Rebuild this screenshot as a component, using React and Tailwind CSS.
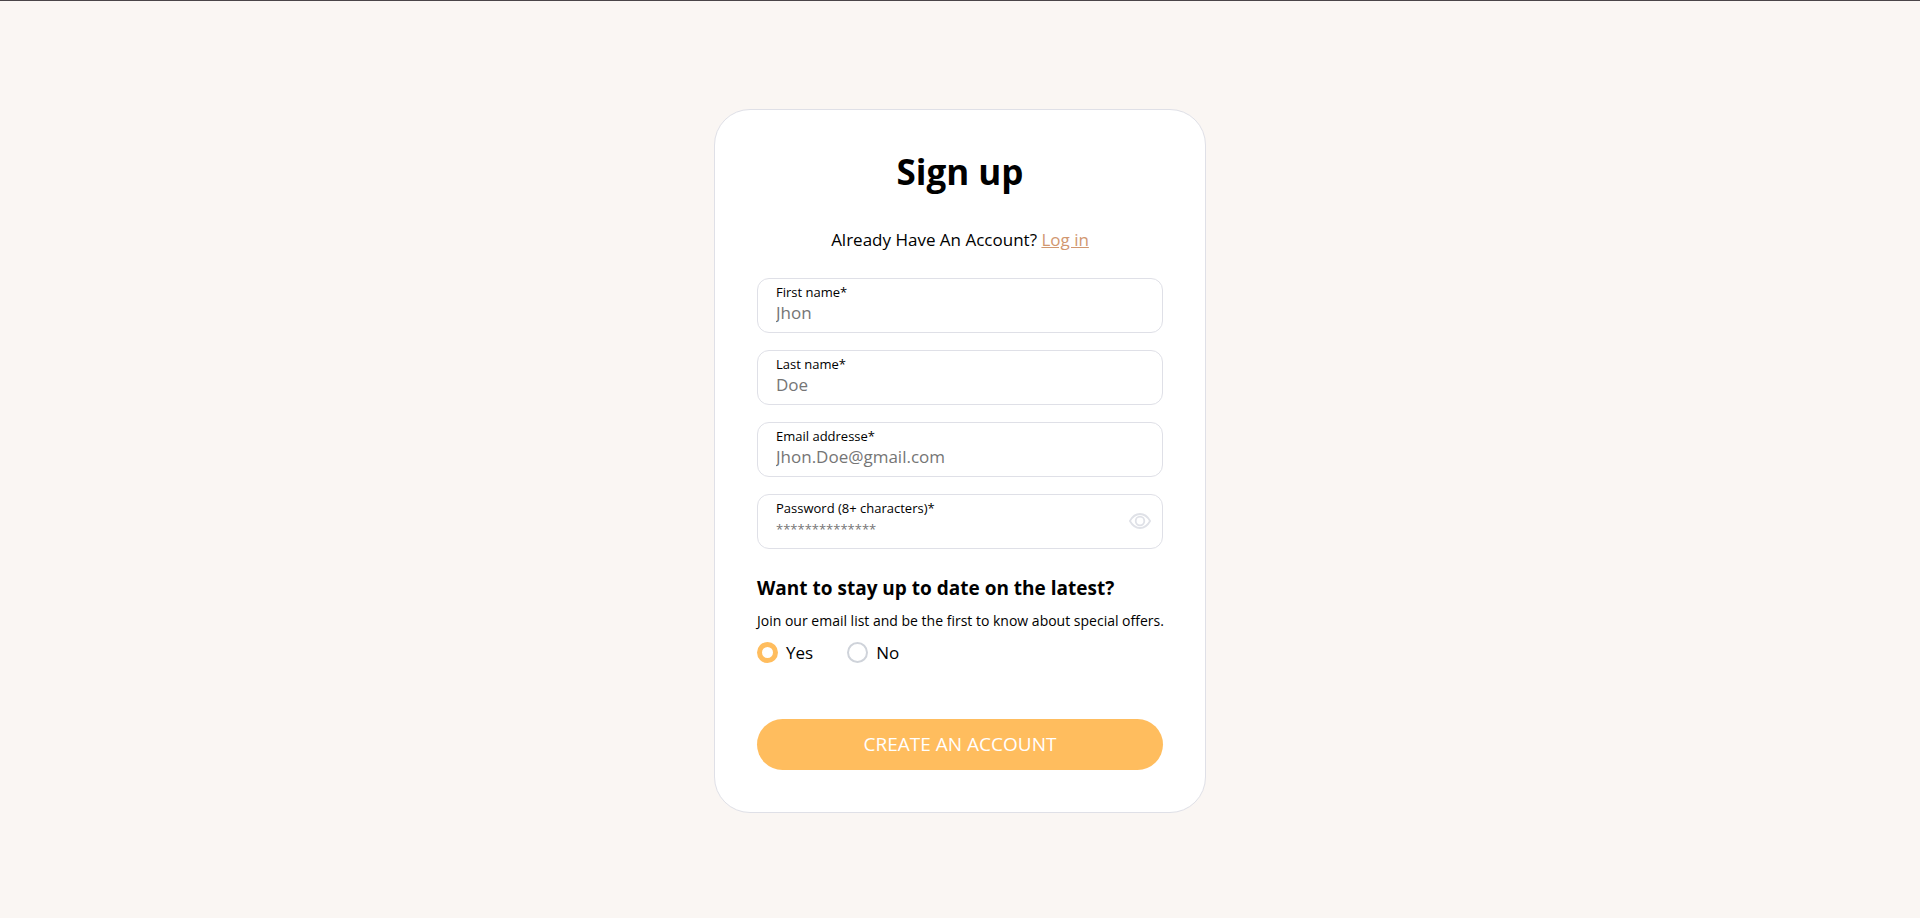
import { useState } from "react";

function Field({ id, label, type = "text", placeholder, textSize = "text-[17px]", children }) {
  return (
    <div className="flex h-[55px] items-center rounded-xl border border-[#dfe0e7] pr-[10px] pl-[18px]">
      <div className="flex min-w-0 flex-1 flex-col pb-1">
        <label htmlFor={id} className="text-[13px] leading-5">
          {label}
        </label>
        <input
          id={id}
          name={id}
          type={type}
          placeholder={placeholder}
          className={`h-[22px] w-full bg-transparent outline-none placeholder:text-[#757575] ${textSize}`}
        />
      </div>
      {children}
    </div>
  );
}

function Choice({ value, label, checked, onChange }) {
  return (
    <label className="flex items-center gap-2 text-[17px] leading-6">
      <input
        type="radio"
        name="newsletter"
        value={value}
        checked={checked}
        onChange={() => onChange(value)}
        className="size-[21px] appearance-none rounded-full border-2 border-[#cfd3da] bg-white checked:border-5 checked:border-[#ffbd5e]"
      />
      {label}
    </label>
  );
}

export default function App() {
  const [news, setNews] = useState("yes");
  const [visible, setVisible] = useState(false);

  return (
    <main className="flex min-h-screen items-center justify-center border-t border-[#4a4548] bg-[#faf6f3] pt-[2px] font-['Open_Sans',sans-serif] text-black">
      <form
        onSubmit={(e) => e.preventDefault()}
        className="w-full max-w-[492px] rounded-[36px] border border-[#dfe0e7] bg-white p-[42px]"
      >
        <h1 className="text-center text-[35px] leading-10 font-bold">Sign up</h1>
        <p className="mt-9 text-center text-[17px] leading-6">
          Already Have An Account?{" "}
          <a href="#login" className="text-[#d19770] underline">
            Log in
          </a>
        </p>

        <div className="mt-[26px] flex flex-col gap-[17px]">
          <Field id="first-name" label="First name*" placeholder="Jhon" />
          <Field id="last-name" label="Last name*" placeholder="Doe" />
          <Field id="email" label="Email addresse*" type="email" placeholder="Jhon.Doe@gmail.com" />
          <Field
            id="password"
            label="Password (8+ characters)*"
            type={visible ? "text" : "password"}
            placeholder="**************"
            textSize="text-[13px]"
          >
            <button type="button" aria-label="Show password" onClick={() => setVisible(!visible)}>
              <svg width="24" height="24" viewBox="0 0 24 24" fill="none" stroke="#dfe1e7" strokeWidth="1.8">
                <path d="M1.9 12C4.6 7.2 8 5 12 5S19.4 7.2 22.1 12C19.4 16.8 16 19 12 19S4.6 16.8 1.9 12Z" strokeLinejoin="round" />
                <circle cx="12" cy="12" r="4.3" />
              </svg>
            </button>
          </Field>
        </div>

        <h2 className="mt-[25px] text-[19px] leading-7 font-bold">Want to stay up to date on the latest?</h2>
        <p className="mt-[9px] text-[14px] leading-5 sm:whitespace-nowrap">
          Join our email list and be the first to know about special offers.
        </p>
        <div className="mt-[10px] flex gap-[34px]">
          <Choice value="yes" label="Yes" checked={news === "yes"} onChange={setNews} />
          <Choice value="no" label="No" checked={news === "no"} onChange={setNews} />
        </div>

        <button
          type="submit"
          className="mt-[54px] h-[51px] w-full rounded-full bg-[#ffbd5e] text-[19px] leading-6 text-white"
        >
          CREATE AN ACCOUNT
        </button>
      </form>
    </main>
  );
}
